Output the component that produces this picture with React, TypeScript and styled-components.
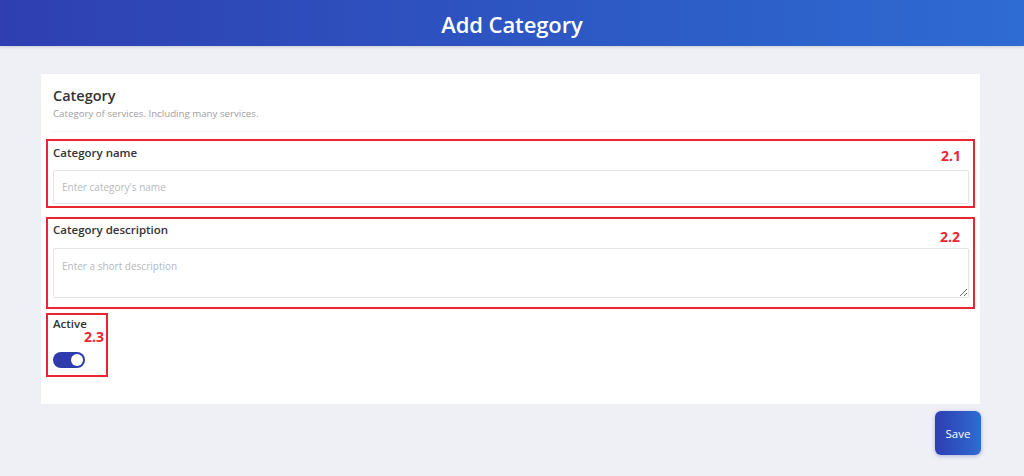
import React from "react";
import styled, { createGlobalStyle } from "styled-components";

const Global = createGlobalStyle`
  * { box-sizing: border-box; }
  body {
    margin: 0;
    background: #eff0f5;
    font-family: "Open Sans", "Noto Sans", sans-serif;
    color: #333;
  }
`;

const Page = styled.div`
  width: 1024px;
  height: 476px;
  display: flex;
  flex-direction: column;
  overflow: hidden;
`;

const Header = styled.header`
  height: 46px;
  flex-shrink: 0;
  background: linear-gradient(90deg, #2f3fb1 0%, #2d5ac5 60%, #2e6bd2 100%);
  box-shadow: 0 1px 3px rgba(0, 0, 0, 0.15);
  display: flex;
  align-items: center;
  justify-content: center;
`;

const Title = styled.h1`
  margin: 1px 0 0;
  color: #fff;
  font-size: 22px;
  font-weight: 600;
  letter-spacing: -0.1px;
`;

const Main = styled.main`
  padding: 28px 44px 0 41px;
  display: flex;
  flex-direction: column;
`;

const Card = styled.section`
  background: #fff;
  height: 330px;
  padding: 12px 11px 0 12px;
  display: flex;
  flex-direction: column;
`;

const CardTitle = styled.h2`
  margin: 0;
  font-size: 14.5px;
  line-height: 20px;
  font-weight: 600;
  color: #333;
`;

const CardSub = styled.p`
  margin: 1px 0 0;
  font-size: 9.7px;
  line-height: 14px;
  color: #a0a0a2;
`;

const Divider = styled.hr`
  margin: 10px 0 0;
  border: none;
  border-top: 1px solid #f4f4f6;
`;

const Field = styled.div<{ $pt: number; $pb: number; $mt: number; $narrow?: boolean }>`
  position: relative;
  margin-top: ${(p) => p.$mt}px;
  margin-left: -7px;
  margin-right: ${(p) => (p.$narrow ? "0" : "-6px")};
  align-self: ${(p) => (p.$narrow ? "flex-start" : "stretch")};
  width: ${(p) => (p.$narrow ? "62px" : "auto")};
  border: 2px solid #ec2533;
  padding: ${(p) => p.$pt}px 4px ${(p) => p.$pb}px 5px;
  display: flex;
  flex-direction: column;
`;

const Label = styled.label`
  font-size: 11.5px;
  line-height: 16px;
  font-weight: 600;
  color: #333;
`;

const Tag = styled.span<{ $top: number; $right: number }>`
  position: absolute;
  top: ${(p) => p.$top}px;
  right: ${(p) => p.$right}px;
  font-size: 14px;
  font-weight: 700;
  color: #ec2533;
  line-height: 16px;
`;

const Input = styled.input`
  margin-top: 9px;
  height: 34px;
  width: 100%;
  border: 1px solid #e4e4e6;
  border-radius: 2px;
  padding: 0 8px;
  font-family: inherit;
  font-size: 10px;
  color: #333;
  &::placeholder { color: #b8b8bb; }
  outline: none;
`;

const TextArea = styled.textarea`
  margin-top: 10px;
  height: 50px;
  width: 100%;
  border: 1px solid #e4e4e6;
  border-radius: 2px;
  padding: 10px 8px;
  font-family: inherit;
  font-size: 10px;
  resize: vertical;
  &::placeholder { color: #b8b8bb; }
  outline: none;
`;

const Toggle = styled.span<{ $on: boolean }>`
  margin-top: 20px;
  width: 32px;
  height: 16px;
  border-radius: 8px;
  background: ${(p) => (p.$on ? "#2f3cae" : "#ccc")};
  display: flex;
  align-items: center;
  justify-content: ${(p) => (p.$on ? "flex-end" : "flex-start")};
  padding: 0 2px;
`;

const Knob = styled.span`
  width: 12px;
  height: 12px;
  border-radius: 50%;
  background: #fff;
`;

const Actions = styled.div`
  display: flex;
  justify-content: flex-end;
  margin-top: 7px;
  margin-right: -1px;
`;

const SaveButton = styled.button`
  width: 46px;
  height: 44px;
  border: none;
  border-radius: 6px;
  background: linear-gradient(90deg, #2f3db1 0%, #2e6cd2 100%);
  color: #fff;
  font-family: inherit;
  font-size: 11.5px;
  box-shadow: 0 1px 4px rgba(40, 60, 160, 0.35);
  cursor: pointer;
`;

export default function App() {
  return (
    <Page>
      <Global />
      <Header>
        <Title>Add Category</Title>
      </Header>
      <Main>
        <Card>
          <CardTitle>Category</CardTitle>
          <CardSub>Category of services. Including many services.</CardSub>
          <Divider />
          <Field $mt={7} $pt={4} $pb={2}>
            <Label>Category name</Label>
            <Tag $top={7} $right={12}>2.1</Tag>
            <Input placeholder="Enter category's name" />
          </Field>
          <Field $mt={9} $pt={3} $pb={9}>
            <Label>Category description</Label>
            <Tag $top={10} $right={13}>2.2</Tag>
            <TextArea placeholder="Enter a short description" />
          </Field>
          <Field $mt={4} $pt={1} $pb={7} $narrow>
            <Label>Active</Label>
            <Tag $top={14} $right={2}>2.3</Tag>
            <Toggle $on>
              <Knob />
            </Toggle>
          </Field>
        </Card>
        <Actions>
          <SaveButton>Save</SaveButton>
        </Actions>
      </Main>
    </Page>
  );
}
